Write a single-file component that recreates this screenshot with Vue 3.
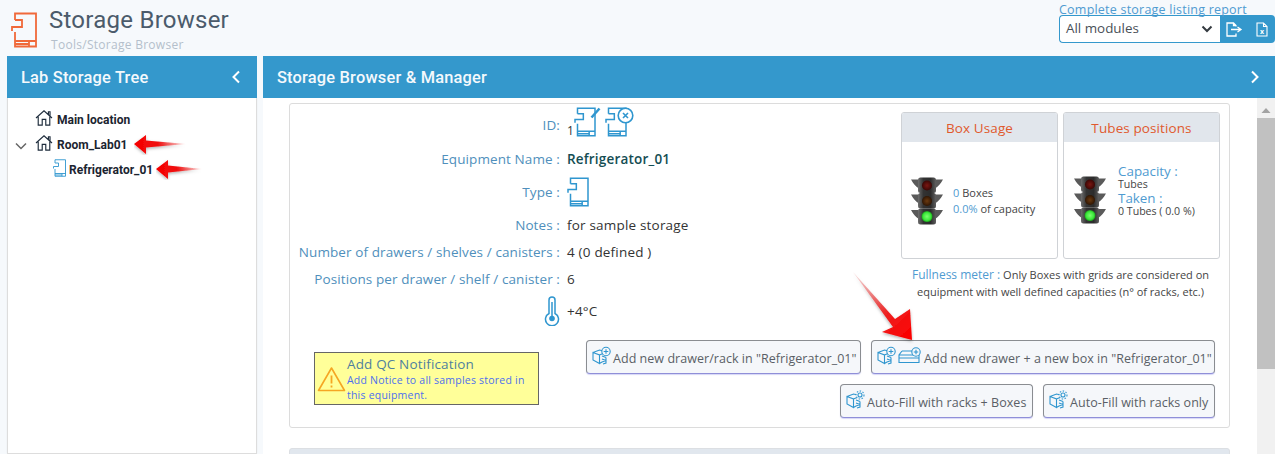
<script setup>
const rows = [
  { label: 'Notes :', value: 'for sample storage', y: 'notes' },
  { label: 'Number of drawers / shelves / canisters :', value: '4 (0 defined )', y: 'num' },
  { label: 'Positions per drawer / shelf / canister :', value: '6', y: 'pos' },
]
</script>

<template>
  <svg class="defs" width="0" height="0" aria-hidden="true">
    <defs>
      <symbol id="fridge" viewBox="0 0 26 36">
        <path fill="none" stroke="currentColor" stroke-width="1.800" d="M4 8V1.500h21v33H4V20M4 8h7v7H1v4M4 29h21M4 32h14M18 29v5.500" />
      </symbol>
      <symbol id="cube" viewBox="0 0 20 20">
        <g fill="none" stroke="currentColor" stroke-width="1.100">
          <path d="M1 6.500 7.500 4l4 1M1 6.500V14l6.500 3.500V9L1 6.500ZM7.500 9 11 7.500M7.500 17.500 10 16" />
          <path d="M10 10l4 1.500M10 13l4 1.500M10 16l4-1.500M14 11.500V17l-3 1" />
          <circle cx="14" cy="5.500" r="4.200" fill="#f5f7fa" />
          <path d="M14 3.200v4.600M11.700 5.500h4.600" />
        </g>
      </symbol>
      <symbol id="gearcube" viewBox="0 0 20 20">
        <g fill="none" stroke="currentColor" stroke-width="1.100">
          <path d="M1 6.500 7.500 4l4 1M1 6.500V14l6.500 3.500V9L1 6.500ZM7.500 9 11 7.500M7.500 17.500 10 16" />
          <path d="M10 10l4 1.500M10 13l4 1.500M10 16l4-1.500M14 11.500V17l-3 1" />
          <circle cx="14" cy="5" r="4" fill="#f5f7fa" stroke-dasharray="1.500 1.500" />
          <circle cx="14" cy="5" r="2" />
        </g>
      </symbol>
      <symbol id="drawerplus" viewBox="0 0 24 17">
        <g fill="none" stroke="currentColor" stroke-width="1.100">
          <path d="M4 4h12M4 4 1 8v7.500h20V8H1M1 11h20M3 15.500h16" />
          <circle cx="18" cy="5" r="4.200" fill="#f5f7fa" />
          <path d="M18 2.800v4.400M15.800 5h4.400" />
        </g>
      </symbol>
      <symbol id="house" viewBox="0 0 20 18">
        <path fill="none" stroke="#1f2d3d" stroke-width="1.300" d="M1 9 10 1l9 8M3.500 7.500V17h4.500v-6.500h4V17h4.500V7.500M15 5V2h1.800v4.500" />
      </symbol>
      <radialGradient id="lampR"><stop offset="0" stop-color="#7a1712" /><stop offset="1" stop-color="#3a0705" /></radialGradient>
      <radialGradient id="lampB"><stop offset="0" stop-color="#6b3a10" /><stop offset="1" stop-color="#2f1604" /></radialGradient>
      <radialGradient id="lampG"><stop offset="0" stop-color="#7dff70" /><stop offset="0.700" stop-color="#3be83a" /><stop offset="1" stop-color="#1c9c1c" /></radialGradient>
      <linearGradient id="house-grad" x1="0" x2="1" y1="0" y2="0">
        <stop offset="0" stop-color="#6e6e6e" /><stop offset="0.300" stop-color="#333" /><stop offset="0.700" stop-color="#2c2c2c" /><stop offset="1" stop-color="#5f5f5f" />
      </linearGradient>
      <symbol id="light" viewBox="0 0 32 48">
        <path fill="#5a5a5a" d="M0 2.500h7.500V11C5 10 2 6 0 2.500ZM32 2.500h-7.500V11C27 10 30 6 32 2.500ZM0 17.500h7.500V26C5 25 2 21 0 17.500ZM32 17.500h-7.500V26C27 25 30 21 32 17.500ZM0 33h7.500v8.500C5 40.500 2 36.500 0 33ZM32 33h-7.500v8.500C27 40.500 30 36.500 32 33Z" />
        <rect x="7" y="0.500" width="18" height="15.500" rx="2.500" fill="url(#house-grad)" />
        <rect x="7" y="16" width="18" height="15.500" rx="2.500" fill="url(#house-grad)" />
        <rect x="7" y="31.500" width="18" height="16" rx="2.500" fill="url(#house-grad)" />
        <circle cx="16" cy="8.500" r="5" fill="url(#lampR)" />
        <circle cx="16" cy="24" r="5" fill="url(#lampB)" />
        <circle cx="16" cy="39.500" r="5.500" fill="url(#lampG)" />
      </symbol>
      <linearGradient id="arrowh" x1="0" x2="1" y1="0" y2="0">
        <stop offset="0" stop-color="#f50000" />
        <stop offset="0.450" stop-color="#f01010" />
        <stop offset="1" stop-color="#f01010" stop-opacity="0.050" />
      </linearGradient>
      <linearGradient id="arrowd" x1="0.100" x2="0.900" y1="0" y2="1">
        <stop offset="0" stop-color="#e06060" stop-opacity="0.250" />
        <stop offset="0.600" stop-color="#ee2020" />
        <stop offset="1" stop-color="#fb0000" />
      </linearGradient>
      <filter id="soft" x="-20%" y="-40%" width="140%" height="180%">
        <feDropShadow dx="0" dy="1.500" stdDeviation="1.500" flood-color="#000" flood-opacity="0.300" />
      </filter>
    </defs>
  </svg>

  <div class="page">
    <header class="top">
      <svg class="top-icon"><use href="#fridge" /></svg>
      <div class="titles">
        <h1>Storage Browser</h1>
        <div class="crumb">Tools/Storage Browser</div>
      </div>
      <div class="report">
        <a class="report-link">Complete storage listing report</a>
        <div class="report-controls">
          <div class="select">
            <span>All modules</span>
            <svg width="12" height="8" viewBox="0 0 12 8"><path d="M1.500 1.500 6 6l4.500-4.500" fill="none" stroke="#343a40" stroke-width="2" /></svg>
          </div>
          <button class="tool first" aria-label="Export">
            <svg width="17" height="15" viewBox="0 0 17 15"><path d="M10 4.500V3.500L7.500 1H1v13h9v-2.500M7.500 1v2.500H10M5 7.500h9M11.500 5l3.500 2.500-3.500 2.500" fill="none" stroke="#fff" stroke-width="1.300" /></svg>
          </button>
          <button class="tool" aria-label="Excel">
            <svg width="12" height="15" viewBox="0 0 12 15"><path d="M7.500 1H1v13h10V4.500zM7.500 1v3.500H11" fill="none" stroke="#fff" stroke-width="1.100" /><text x="6" y="12" text-anchor="middle" class="x">x</text></svg>
          </button>
        </div>
      </div>
    </header>

    <div class="columns">
      <aside class="tree">
        <div class="bar">
          <span>Lab Storage Tree</span>
          <svg class="chev" width="10" height="14" viewBox="0 0 10 14"><path d="M8 1.500 2.500 7 8 12.500" fill="none" stroke="#fff" stroke-width="2" /></svg>
        </div>
        <div class="tree-body">
          <div class="node n0"><svg class="house"><use href="#house" /></svg><b>Main location</b></div>
          <div class="node n1">
            <svg class="caret" width="12" height="8" viewBox="0 0 12 8"><path d="M1 1.500 6 6.500l5-5" fill="none" stroke="#666" stroke-width="1.500" /></svg>
            <svg class="house"><use href="#house" /></svg><b>Room_Lab01</b>
            <svg class="arrow-h" width="52" height="21" viewBox="0 0 52 21"><path d="M0 10 12 1v5.500L52 10l-40 3.500V20z" fill="url(#arrowh)" filter="url(#soft)" /></svg>
          </div>
          <div class="node n2">
            <svg class="tree-fridge"><use href="#fridge" /></svg><b>Refrigerator_01</b>
            <svg class="arrow-h" width="46" height="21" viewBox="0 0 46 21"><path d="M0 10 12 1v5.500L46 10l-34 3.500V20z" fill="url(#arrowh)" filter="url(#soft)" /></svg>
          </div>
        </div>
      </aside>

      <main class="manager">
        <div class="bar">
          <span>Storage Browser &amp; Manager</span>
          <svg class="chev" width="10" height="14" viewBox="0 0 10 14"><path d="M2 1.500 7.500 7 2 12.500" fill="none" stroke="#fff" stroke-width="2" /></svg>
        </div>
        <div class="manager-body">
          <div class="scroll-content">
            <section class="card">
              <div class="upper">
                <div class="info">
                  <div class="row r-id">
                    <span class="lab">ID:</span>
                    <span class="val id-val">
                      <i>1</i>
                      <span class="ic-wrap">
                        <svg class="fr"><use href="#fridge" /></svg>
                        <svg class="pencil" width="12" height="12" viewBox="0 0 12 12"><path d="M1.500 10.500 9.500 1.500" stroke="#2f96cf" stroke-width="2.500" /></svg>
                      </span>
                      <span class="ic-wrap">
                        <svg class="fr"><use href="#fridge" /></svg>
                        <svg class="cross" width="17" height="17" viewBox="0 0 17 17"><circle cx="8.500" cy="8.500" r="7.300" fill="#fff" stroke="#2f96cf" stroke-width="1.600" /><path d="M6 6l5 5M11 6l-5 5" stroke="#2f96cf" stroke-width="1.600" /></svg>
                      </span>
                    </span>
                  </div>
                  <div class="row r-name"><span class="lab">Equipment Name :</span><strong class="val name">Refrigerator_01</strong></div>
                  <div class="row r-type"><span class="lab">Type :</span><span class="val"><svg class="fr"><use href="#fridge" /></svg></span></div>
                  <div v-for="r in rows" :key="r.y" class="row" :class="'r-' + r.y">
                    <span class="lab">{{ r.label }}</span><span class="val">{{ r.value }}</span>
                  </div>
                  <div class="row r-temp">
                    <span class="lab">
                      <svg width="16" height="30" viewBox="0 0 16 30"><path d="M5 17.500V4a3 3 0 0 1 6 0v13.500a6.500 6.500 0 1 1-6 0Z" fill="none" stroke="#2f96cf" stroke-width="1.500" /><path d="M8 6v15" stroke="#2f96cf" stroke-width="1.500" /><circle cx="8" cy="22.500" r="2.800" fill="#2f96cf" /></svg>
                    </span>
                    <span class="val">+4°C</span>
                  </div>
                </div>

                <div class="stats">
                  <div class="stat-cards">
                    <div class="stat s1">
                      <div class="stat-head">Box Usage</div>
                      <div class="stat-body">
                        <svg class="tl"><use href="#light" /></svg>
                        <div class="stat-text">
                          <p><em>0</em> Boxes</p>
                          <p><em>0.0%</em> of capacity</p>
                        </div>
                      </div>
                    </div>
                    <div class="stat s2">
                      <div class="stat-head">Tubes positions</div>
                      <div class="stat-body">
                        <svg class="tl"><use href="#light" /></svg>
                        <div class="stat-text tight">
                          <p class="big">Capacity :</p>
                          <p>Tubes</p>
                          <p class="big">Taken :</p>
                          <p>0 Tubes ( 0.0 %)</p>
                        </div>
                      </div>
                    </div>
                  </div>
                  <p class="meter"><span>Fullness meter :</span> Only Boxes with grids are considered on equipment with well defined capacities (n° of racks, etc.)</p>
                </div>
              </div>

              <div class="lower">
                <div class="notice">
                  <svg width="29" height="26" viewBox="0 0 29 26"><path d="M14.500 2 27.500 24.500h-26z" fill="none" stroke="#f5a623" stroke-width="1.600" stroke-linejoin="round" /><path d="M14.500 9.500v8M14.500 19.500v2" stroke="#f5a623" stroke-width="1.800" /></svg>
                  <div class="notice-copy">
                    <div class="notice-title">Add QC Notification</div>
                    <div class="notice-text">Add Notice to all samples stored in this equipment.</div>
                  </div>
                </div>
                <div class="actions">
                  <div class="action-row">
                    <button class="act a1"><svg class="bi"><use href="#cube" /></svg><span>Add new drawer/rack in "Refrigerator_01"</span></button>
                    <button class="act a2"><svg class="bi"><use href="#cube" /></svg><svg class="di"><use href="#drawerplus" /></svg><span>Add new drawer + a new box in "Refrigerator_01"</span></button>
                  </div>
                  <div class="action-row">
                    <button class="act a3"><svg class="bi"><use href="#gearcube" /></svg><span>Auto-Fill with racks + Boxes</span></button>
                    <button class="act a4"><svg class="bi"><use href="#gearcube" /></svg><span>Auto-Fill with racks only</span></button>
                  </div>
                </div>
              </div>
              <svg class="arrow-d" width="62" height="72" viewBox="0 0 62 72"><path d="M1 0 43 47 58 37 60 68 30 60 41 55z" fill="url(#arrowd)" filter="url(#soft)" /></svg>
            </section>
            <div class="next-head"><span class="next-icon"></span></div>
          </div>
          <div class="scrollbar">
            <svg width="18" height="18" viewBox="0 0 18 18"><path d="M4.500 12 9 7l4.500 5z" fill="#a3a3a3" /></svg>
            <div class="thumb"></div>
          </div>
        </div>
      </main>
    </div>
  </div>
</template>

<style scoped>
.defs { position: absolute; }
.page { width: 1275px; height: 454px; overflow: hidden; background: #f6f9fc; font-family: "Open Sans", sans-serif; color: #343a40; }
.top { height: 56px; display: flex; align-items: flex-start; box-sizing: border-box; padding-left: 11px; }
.top-icon { width: 26px; height: 36px; margin-top: 12px; color: #f0693a; }
.titles { margin-left: 12px; }
h1 { margin: 5px 0 0; font: 400 24px/30px Roboto, sans-serif; color: #4b5b6b; letter-spacing: 0.250px; }
.crumb { margin: 2px 0 0 2px; font: 400 12px/16px "Open Sans", sans-serif; color: #b4bfcb; letter-spacing: 0.280px; }
.report { margin-left: auto; padding-top: 2px; width: 216px; }
.report-link { display: block; font-size: 12.500px; line-height: 13px; color: #4f9bd1; white-space: nowrap; letter-spacing: 0.220px; position: relative; top: 1px; }
.report-controls { display: flex; height: 28px; }
.select { width: 161px; box-sizing: border-box; background: #fff; border: 1px solid #3498cc; border-right: 0; border-radius: 4px 0 0 4px; display: flex; align-items: center; justify-content: space-between; padding: 0 7px 2px 6px; font-size: 13.400px; color: #495057; }
.select svg { margin-top: 2px; }
.tool { width: 27px; border: 0; padding: 0; background: #3498cc; display: flex; align-items: center; justify-content: center; }
.tool.first { width: 28px; }
.tool:last-child { border-radius: 0 4px 4px 0; }
.x { font: 700 7px "Open Sans", sans-serif; fill: #fff; }

.columns { display: flex; padding-left: 7px; gap: 6px; }
.bar { height: 42px; background: #3498cc; color: #f4f9fc; display: flex; align-items: center; justify-content: space-between; font: 500 16.400px Roboto, sans-serif; letter-spacing: 0.200px; }
.tree { width: 250px; flex: none; }
.tree .bar { padding: 0 16px 0 14px; }
.tree-body { height: 356px; background: #fff; box-sizing: border-box; border: 1px solid #ddd; border-top: 0; position: relative; padding-top: 9px; box-shadow: 0 0 2px rgba(0,0,0,0.05); }
.node { height: 25px; display: flex; align-items: center; position: relative; font: 700 12px Roboto, sans-serif; color: #1b2430; }
.node b { font-weight: 700; white-space: nowrap; }
.n0, .n1 { padding-left: 27px; }
.house { width: 18px; height: 16px; margin-right: 4px; margin-top: -4px; }
.caret { position: absolute; left: 7px; top: 10px; }
.n2 { padding-left: 45px; }
.tree-fridge { width: 13px; height: 18px; color: #2f96cf; margin-right: 3px; margin-top: -4px; }
.arrow-h { position: absolute; top: 2px; left: 126px; }
.n2 .arrow-h { left: 148px; }

.manager { flex: 1; min-width: 0; }
.manager .bar { padding: 0 15px 0 14px; }
.manager-body { height: 356px; background: #fff; display: flex; }
.scroll-content { flex: 1; min-width: 0; padding: 5px 27px 0 26px; }
.card { height: 325px; box-sizing: border-box; border: 1px solid #dcdcdc; border-radius: 3px; background: #fff; position: relative; display: flex; flex-direction: column; font-size: 13.500px; }
.upper { display: flex; height: 236px; flex: none; }
.info { width: 611px; flex: none; padding-top: 3px; }
.row { display: flex; align-items: center; }
.lab { box-sizing: border-box; width: 270px; flex: none; text-align: right; color: #4f8fbc; white-space: nowrap; letter-spacing: 0.100px; font-size: 13.500px; display: block; }
.val { margin-left: 7px; white-space: nowrap; color: #333; letter-spacing: 0.190px; }
.r-id { height: 31px; }
.r-id .lab { margin-top: 4px; }
.r-name { height: 35px; margin-top: 3px; }
.r-type { height: 32px; }
.r-notes { height: 33px; }
.r-num, .r-pos { height: 26px; margin-top: 1px; }
.r-num { margin-top: -2px; }
.r-temp { height: 34px; margin-top: 2px; }
.r-temp .lab { height: 30px; letter-spacing: 0; }
.name { font-weight: 600; font-size: 13.500px; color: #144d53; }
.fr { width: 22px; height: 30px; color: #2f96cf; display: block; }
.id-val { display: flex; align-items: center; gap: 4px; }
.id-val i { font-style: normal; align-self: flex-end; font-size: 12px; line-height: 15px; width: 5px; margin-right: -2px; }
.ic-wrap { position: relative; width: 27px; height: 31px; display: block; }
.pencil { position: absolute; left: 16px; top: 0; }
.cross { position: absolute; left: 12px; top: 0; }
.stats { width: 319px; flex: none; margin-top: 8px; }
.stat-cards { display: flex; gap: 5px; }
.stat { width: 157px; height: 147px; box-sizing: border-box; border: 1px solid #cfd2d6; border-radius: 3px; overflow: hidden; }
.stat-head { height: 29px; background: #e1e6ec; color: #e0592d; text-align: center; font-size: 13.500px; line-height: 31px; letter-spacing: 0.100px; }
.stat-body { height: 116px; display: flex; align-items: center; padding-left: 9px; }
.tl { width: 32px; height: 48px; flex: none; margin-top: 1px; }
.s2 .tl { margin-top: -1px; }
.stat-text { margin-left: 10px; font-size: 11px; line-height: 16px; color: #444; white-space: nowrap; padding-top: 2px; }
.stat-text.tight { line-height: 13px; margin: -19px 0 0 12px; padding-top: 0; font-size: 10.600px; }
.stat-text p { margin: 0; }
.stat-text em { font-style: normal; color: #4f9bd1; }
.big { font-size: 13.400px; color: #4f9bd1; line-height: 14px; }
.s2 .stat-body { padding-left: 10px; }
.meter { width: 319px; margin: 7px 0 0 0; text-align: center; font-size: 11px; line-height: 17px; color: #444; }
.meter span { font-size: 12px; color: #4f9bd1; }

.lower { flex: 1; position: relative; display: flex; justify-content: space-between; padding: 0 14px 0 24px; }
.notice { align-self: flex-start; margin-top: 12px; width: 225px; height: 53px; box-sizing: border-box; background: #ffff99; border: 1px solid #666; display: flex; padding-left: 2px; }
.notice svg { flex: none; margin-top: 13px; }
.notice-copy { padding-top: 3px; }
.notice-title { font-size: 13.500px; line-height: 17px; color: #4f7f9e; white-space: nowrap; letter-spacing: 0.150px; margin-left: 1px; }
.notice-text { font-size: 10.500px; line-height: 15px; color: #4d70ee; margin-left: 1px; letter-spacing: 0.220px; width: 185px; }
.actions { display: flex; flex-direction: column; gap: 10px; align-items: flex-end; }
.action-row { display: flex; gap: 10px; justify-content: flex-end; }
.act { height: 34px; box-sizing: border-box; border: 1px solid #8a8d91; border-bottom: 1px solid #8f8fd8; border-radius: 4px; background: #f5f7fa; font: 400 12.500px "Open Sans", sans-serif; color: #5a5f66; display: flex; align-items: center; padding: 0 4px 0 5px; white-space: nowrap; box-shadow: 0 1px 1px rgba(90,90,220,0.250); letter-spacing: 0.040px; }
.act span { margin-top: 2px; }
.bi { width: 20px; height: 20px; color: #2f96cf; margin-right: 1px; margin-top: -3px; flex: none; }
.di { width: 24px; height: 17px; color: #2f96cf; margin: -3px 2px 0 0; flex: none; }
.a1 { width: 275px; }
.a2 { width: 344px; }
.a3 { width: 193px; }
.a4 { width: 172px; }
.arrow-d { position: absolute; left: 562px; top: 168px; }
.next-head { height: 30px; margin-top: 20px; background: #e1e7ee; border-radius: 3px 3px 0 0; border: 1px solid #dcdfe3; box-sizing: border-box; padding: 5px 0 0 7px; }
.next-icon { display: block; width: 9px; height: 12px; background: #f0693a; }
.scrollbar { width: 18px; background: #f1f1f1; flex: none; }
.scrollbar svg { display: block; margin-top: 3px; }
.thumb { height: 251px; background: #c1c1c1; margin-top: -1px; }
</style>
